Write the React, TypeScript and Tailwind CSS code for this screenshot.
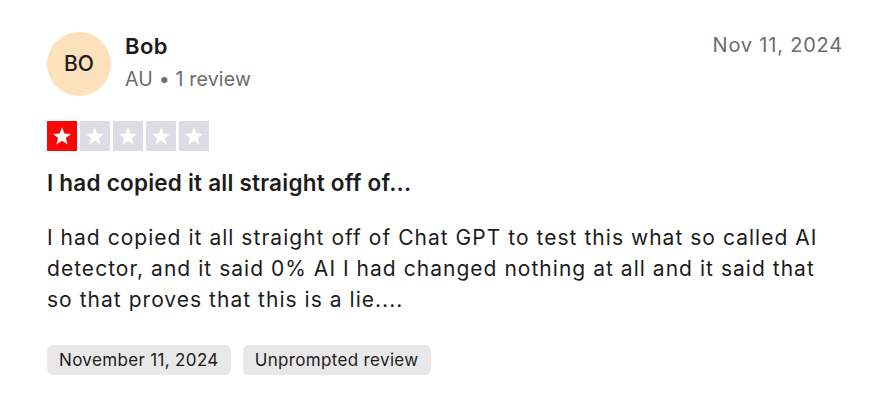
const stars = [1, 2, 3, 4, 5];

function StarBox({ filled }: { filled: boolean }) {
  return (
    <div
      className={
        "flex h-[30px] w-[30px] items-center justify-center " +
        (filled ? "bg-[#fb0505]" : "bg-[#dcdce6]")
      }
    >
      <svg viewBox="0 0 24 24" className="h-[22px] w-[22px]">
        <path
          d="M12 2.5l2.6 6.9 7.2.3-5.6 4.6 1.9 7-6.1-4-6.1 4 1.9-7-5.6-4.6 7.2-.3z"
          fill="#ffffff"
        />
      </svg>
    </div>
  );
}

export default function App() {
  return (
    <div className="min-h-screen w-[873px] bg-white font-['Inter',sans-serif] text-[#1c1c1c]">
      <article className="pl-[47px] pr-[30px] pt-[32px]">
        <header className="flex items-start justify-between">
          <div className="flex items-center gap-[14px]">
            <div className="flex h-[64px] w-[64px] items-center justify-center rounded-full bg-[#fde1bd] text-[21px] font-medium">
              BO
            </div>
            <div className="flex flex-col">
              <span className="-mt-[5px] text-[22px] font-semibold leading-[28px] tracking-[0.02em]">Bob</span>
              <span className="mt-[7px] text-[19.5px] leading-[24px] tracking-[0.01em] text-[#6c6c6c]">
                AU • 1 review
              </span>
            </div>
          </div>
          <time className="mt-[1px] text-[20px] leading-[24px] tracking-[0.04em] text-[#6c6c6c]">
            Nov 11, 2024
          </time>
        </header>

        <div className="mt-[25px] flex gap-[3px]">
          {stars.map((s) => (
            <StarBox key={s} filled={s === 1} />
          ))}
        </div>

        <h2 className="mt-[17px] text-[22.5px] font-semibold leading-[30px] tracking-[0.01em]">
          I had copied it all straight off of...
        </h2>

        <p className="mt-[24px] w-[786px] text-[21px] leading-[31px] tracking-[0.049em]">
          I had copied it all straight off of Chat GPT to test this what so called AI detector, and it
          said 0% AI I had changed nothing at all and it said that so that proves that this is a
          lie....
        </p>

        <div className="mt-[30px] flex gap-[12px]">
          <span className="rounded-[6px] bg-[#e8e8e8] px-[12px] py-[4px] text-[17px] leading-[22px] tracking-[0.02em]">
            November 11, 2024
          </span>
          <span className="rounded-[6px] bg-[#e8e8e8] px-[12px] py-[4px] text-[17px] leading-[22px] tracking-[0.02em]">
            Unprompted review
          </span>
        </div>
      </article>
    </div>
  );
}
